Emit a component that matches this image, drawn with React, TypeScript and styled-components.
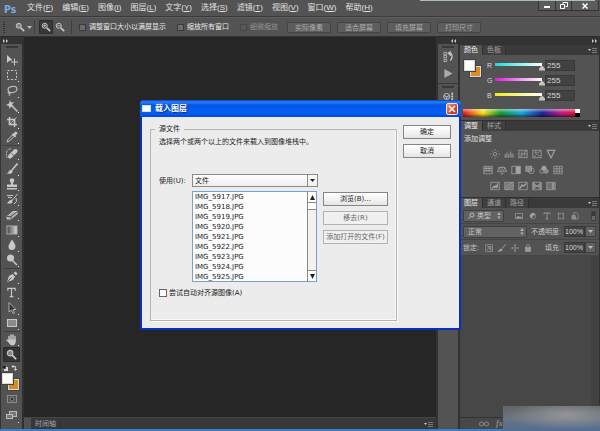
import React from "react";
import styled, { createGlobalStyle, css } from "styled-components";

const sans = `"Liberation Sans", "Noto Sans CJK SC", sans-serif`;
const dialogSans = `"DejaVu Sans", "Noto Sans CJK SC", sans-serif`;

const GlobalStyle = createGlobalStyle`
  * { box-sizing: border-box; }
  body { margin: 0; background: #262626; font-family: ${sans}; font-size: 7px; line-height: 10px; color: #d6d6d6; overflow: hidden; }
  button, input, select { font: inherit; color: inherit; margin: 0; padding: 0; border: 0; background: none; appearance: none; border-radius: 0; outline: 0; }
  svg { display: block; flex: none; }
`;

const Window = styled.div`
  position: relative;
  display: flex;
  flex-direction: column;
  height: 100vh;
  background: #262626;
  border-bottom: 2px solid #3f7cc4;
`;

/* ---------- menu bar ---------- */
const MenuBar = styled.header`
  position: relative;
  display: flex;
  align-items: center;
  height: 17px;
  background: #535353;
  border-bottom: 1px solid #3a3a3a;
`;
const Logo = styled.span`
  width: 27px;
  padding-left: 4px;
  font: bold 11px/15px "Noto Sans", sans-serif;
  color: #79b0e6;
`;
const Menus = styled.nav`
  display: flex;
  flex: 1;
  gap: 9px;
`;
const MenuButton = styled.button`
  font-size: 8px;
  line-height: 14px;
  color: #e2e2e2;
  white-space: nowrap;
`;
const WindowEdge = styled.div`
  position: absolute;
  top: 0;
  left: 70%;
  right: 5px;
  height: 1px;
  background: #a9bcc4;
`;
const WindowButtons = styled.div`
  display: flex;
  align-self: flex-start;
  margin: 1px 1px 0 0;
  border: 1px solid #343434;
  border-top: 0;
`;
const WindowButton = styled.button<{ $wide?: boolean }>`
  display: grid;
  place-items: center;
  width: ${(p) => (p.$wide ? 27 : 16)}px;
  height: 9px;
  background: #5c5c5c;
  & + & { border-left: 1px solid #343434; }
`;

/* ---------- options bar ---------- */
const OptionsBar = styled.div`
  display: flex;
  align-items: center;
  height: 19px;
  padding-left: 3px;
  background: #535353;
  border-top: 1px solid #5e5e5e;
  white-space: nowrap;
`;
const Grip = styled.i`
  width: 2px;
  height: 11px;
  margin-right: 8px;
  border-left: 1px dotted #333;
  border-right: 1px dotted #333;
`;
const Divider = styled.i`
  width: 1px;
  height: 14px;
  margin-left: 2px;
  background: #3f3f3f;
`;
const ToolToggle = styled.button<{ $on?: boolean }>`
  display: grid;
  place-items: center;
  width: 14px;
  height: 14px;
  ${(p) => p.$on && css`background: #383838; border: 1px solid #2c2c2c; border-radius: 1px;`}
`;
const ZoomModes = styled.div`
  display: flex;
  margin: 0 7px 0 4px;
  padding-right: 4px;
  border-right: 1px solid #3f3f3f;
`;
const OptionLabel = styled.label<{ $dim?: boolean }>`
  display: flex;
  align-items: center;
  gap: 3px;
  margin-right: ${(p) => (p.$dim ? 9 : 11)}px;
  color: ${(p) => (p.$dim ? "#929292" : "#e8e8e8")};
  input {
    width: 7px;
    height: 7px;
    background: ${(p) => (p.$dim ? "#575757" : "#6b6b6b")};
    border: 1px solid ${(p) => (p.$dim ? "#474747" : "#3b3b3b")};
  }
`;
const OptionButton = styled.button`
  width: 44px;
  height: 11px;
  margin-right: 6px;
  line-height: 9px;
  color: #ababab;
  background: #5d5d5d;
  border: 1px solid #444;
  border-radius: 1px;
`;

/* ---------- work area ---------- */
const WorkArea = styled.main`
  display: flex;
  flex: 1;
  min-height: 0;
`;
const DockHeader = styled.div<{ $right?: boolean }>`
  display: flex;
  align-items: center;
  justify-content: ${(p) => (p.$right ? "flex-end" : "flex-start")};
  height: 8px;
  padding: 0 2px;
  background: #333;
  border-top: 1px solid #2a2a2a;
`;
const ToolColumn = styled.aside`
  display: flex;
  flex-direction: column;
  width: 24px;
  border-left: 1px solid #333;
  border-right: 2px solid #303030;
  background: #535353;
`;
const PanelGrip = styled.i`
  width: 12px;
  height: 2px;
  margin: 2px auto 0;
  background: #393939;
`;
const ToolStack = styled.div`
  padding-top: 4px;
`;
const ToolGroup = styled.div<{ $height: number }>`
  display: grid;
  grid-auto-rows: 1fr;
  height: ${(p) => p.$height}px;
  margin: 0 2px;
  & + & { border-top: 1px solid #404040; }
`;
const ToolButton = styled.button<{ $on?: boolean }>`
  position: relative;
  display: grid;
  place-items: center;
  ${(p) => p.$on && css`background: #353535; border: 1px solid #292929; border-radius: 1px;`}
`;
const Flyout = styled.i`
  position: absolute;
  right: 1px;
  bottom: 1px;
  width: 1px;
  height: 1px;
  background: #e8e8e8;
`;
const MiniRow = styled.div`
  display: flex;
  justify-content: space-between;
  padding: 3px 4px 2px 1px;
`;
const Swatches = styled.div<{ $size: number }>`
  position: relative;
  width: 17px;
  height: 17px;
  margin-left: 1px;
  i {
    position: absolute;
    width: ${(p) => p.$size}px;
    height: ${(p) => p.$size}px;
    border: 1px solid #d9d9d9;
    outline: 1px solid #444;
  }
  i:first-child { right: 0; bottom: 0; background: #d98c22; }
  i:last-child { left: 0; top: 0; background: #fff; }
`;
const LowerTool = styled.button`
  position: relative;
  display: grid;
  place-items: center;
  height: 17px;
  margin: 0 2px;
`;
const Center = styled.section`
  display: flex;
  flex: 1;
  flex-direction: column;
  min-width: 0;
  border-top: 1px solid #333;
`;
const Canvas = styled.div`
  flex: 1;
  background: #262626;
`;
const Timeline = styled.footer`
  display: flex;
  align-items: center;
  height: 12px;
  padding-right: 3px;
  background: #383838;
  border-top: 1px solid #454545;
`;
const TimelineStub = styled.i`
  width: 7px;
  height: 11px;
  background: #505050;
`;
const TimelineTab = styled.button`
  flex: none;
  margin-right: auto;
  padding: 0 4px;
  border-right: 1px solid #2e2e2e;
  color: #a5a5a5;
`;
const IconStrip = styled.aside`
  display: flex;
  flex-direction: column;
  width: 24px;
  border-left: 2px solid #323232;
  border-right: 2px solid #323232;
  background: #535353;
`;
const StripGroup = styled.div`
  display: flex;
  flex-direction: column;
  align-items: center;
  height: 40px;
  border-bottom: 1px solid #383838;
`;
const StripButton = styled.button`
  display: grid;
  place-items: center;
  height: 17px;
`;

/* ---------- panels ---------- */
const Panels = styled.aside`
  display: flex;
  flex-direction: column;
  width: 140px;
  border-right: 1px solid #303030;
  background: #535353;
`;
const TabBar = styled.div`
  display: flex;
  align-items: center;
  height: 11px;
  padding-right: 2px;
  background: #3a3a3a;
  border-top: 1px solid #303030;
  svg { margin-left: auto; }
`;
const Tab = styled.button<{ $on?: boolean }>`
  height: 10px;
  padding: 0 4px;
  border-right: 1px solid #303030;
  color: ${(p) => (p.$on ? "#ededed" : "#a0a0a0")};
  background: ${(p) => (p.$on ? "#535353" : "#404040")};
`;
const ColorBody = styled.div`
  display: grid;
  grid-template-columns: 17px 1fr;
  column-gap: 7px;
  height: 65px;
  padding: 5px 4px 0 3px;
`;
const ChannelList = styled.div`
  display: flex;
  flex-direction: column;
  gap: 4px;
`;
const Channel = styled.label`
  display: flex;
  align-items: center;
  height: 11px;
  color: #d8d8d8;
  span { width: 8px; }
`;
const Slider = styled.input<{ $color: string }>`
  width: 50px;
  height: 10px;
  &::-webkit-slider-runnable-track {
    height: 10px;
    background: linear-gradient(90deg, ${(p) => p.$color}, #fff) 0 2px / 47px 3px no-repeat;
  }
  &::-webkit-slider-thumb {
    appearance: none;
    width: 6px;
    height: 5px;
    margin-top: 5px;
    background: #c4c4c4;
    clip-path: polygon(50% 0, 100% 60%, 100% 100%, 0 100%, 0 60%);
  }
`;
const NumberBox = styled.input`
  width: 30px;
  height: 11px;
  padding-left: 1px;
  font-size: 8px;
  color: #d5d5d5;
  background: #424242;
  border: 1px solid #383838;
`;
const PercentBox = styled(NumberBox)`
  width: 21px;
  padding: 0;
  font-size: 7px;
`;
const Spectrum = styled.div`
  grid-column: 1 / -1;
  display: flex;
  height: 8px;
  width: 117px;
  margin-top: 4px;
  background:
    linear-gradient(180deg, rgba(255, 255, 255, 0.5), transparent 45%, transparent 55%, rgba(0, 0, 0, 0.55)),
    linear-gradient(90deg, #e8132a, #f7e21c 17%, #189a3a 32%, #1ba5dc 50%, #23239a 68%, #c01c88 84%, #e8132a 98%);
  &::after {
    content: "";
    width: 5px;
    margin-left: auto;
    background: linear-gradient(#fff 50%, #000 50%);
  }
`;
const AdjustBody = styled.div`
  height: 66px;
  padding: 3px 4px;
  color: #e2e2e2;
`;
const AdjustGrid = styled.div`
  display: flex;
  flex-direction: column;
  align-items: center;
  gap: 2px;
  margin: 3px 14px 0 0;
`;
const AdjustRow = styled.div`
  display: flex;
  gap: 2px;
`;
const IconButton = styled.button`
  display: grid;
  place-items: center;
  width: 12px;
  height: 14px;
`;
const LayerRow = styled.div`
  display: flex;
  align-items: center;
  height: 16px;
  padding: 0 3px;
  border-bottom: 1px solid #454545;
  color: #c6c6c6;
  white-space: nowrap;
`;
const SelectFrame = styled.span<{ $width: number }>`
  display: flex;
  align-items: center;
  gap: 2px;
  width: ${(p) => p.$width}px;
  height: 12px;
  padding: 0 2px 0 4px;
  background: #626262;
  border: 1px solid #404040;
  border-radius: 1px;
  select { flex: 1; min-width: 0; height: 10px; }
`;
const LayerIcons = styled.div`
  display: flex;
  flex: 1;
  gap: 2px;
  padding-left: 9px;
`;
const LockIcons = styled(LayerIcons)`
  gap: 1px;
  padding-left: 4px;
`;
const FilterSwitch = styled.button`
  width: 5px;
  height: 10px;
  background: linear-gradient(#383838 45%, #696969 45%);
  border: 1px solid #404040;
`;
const Field = styled.label`
  display: flex;
  align-items: center;
  gap: 3px;
  margin-left: auto;
`;
const DropButton = styled.button`
  display: grid;
  place-items: center;
  width: 11px;
  height: 11px;
  background: #626262;
  border: 1px solid #404040;
`;
const LayerArea = styled.div`
  flex: 1;
  background: #474747;
  border-right: 8px solid #414141;
`;
const LayerFooter = styled.footer`
  display: flex;
  align-items: center;
  gap: 7px;
  height: 12px;
  padding-left: 19px;
  background: #484848;
  border-top: 1px solid #353535;
  color: #8d8d8d;
  em { font: italic bold 8px/10px "Liberation Serif", serif; }
`;
const CornerHaze = styled.div`
  position: absolute;
  right: 0;
  bottom: -2px;
  width: 97px;
  height: 25px;
  background:
    radial-gradient(ellipse at 65% 35%, rgba(165, 165, 165, 0.7), transparent 65%),
    linear-gradient(180deg, #646464, #6b7580 50%, #526d94);
`;

/* ---------- dialog ---------- */
const Dialog = styled.section`
  position: absolute;
  left: 140px;
  top: 100px;
  width: 321px;
  font-family: ${dialogSans};
  color: #222;
  background: #ececec;
  border: 2px solid #0a2fc4;
  border-top: 0;
  border-radius: 4px 4px 0 0;
`;
const TitleBar = styled.header`
  display: flex;
  align-items: center;
  gap: 4px;
  height: 17px;
  margin: 0 -2px;
  padding: 0 3px 0 2px;
  border-radius: 4px 4px 0 0;
  background: linear-gradient(#0841c8, #2a80f8 12%, #0455e6 30%, #0560f5 75%, #0449cf);
  color: #fff;
  h1 { flex: 1; margin: 0; font: bold 8px/14px ${dialogSans}; text-shadow: 1px 1px #0a2a8a; }
`;
const TitleIcon = styled.i`
  width: 9px;
  height: 7px;
  background: #fff;
  border: 1px solid #cfe0ff;
`;
const CloseButton = styled.button`
  display: grid;
  place-items: center;
  width: 12px;
  height: 12px;
  background: linear-gradient(135deg, #f0967a, #d8432a 60%, #b83418);
  border: 1px solid #f5e3de;
  border-radius: 2px;
`;
const DialogBody = styled.div`
  display: flex;
  gap: 6px;
  padding: 7px 8px 7px;
`;
const Source = styled.fieldset`
  flex: 1;
  min-width: 0;
  height: 197px;
  margin: 0;
  padding: 0 8px;
  border: 1px solid #b4b4b4;
  box-shadow: inset -1px -1px #fafafa, 1px 1px #fafafa;
  legend { padding: 0 4px; margin-left: -4px; line-height: 10px; background: #ececec; }
  p { margin: 3px 0 27px; white-space: nowrap; }
`;
const UseRow = styled.div`
  display: grid;
  grid-template-columns: 33px 126px;
  align-items: center;
`;
const UseSelect = styled.span`
  display: flex;
  height: 13px;
  background: linear-gradient(#fff, #eee);
  border: 1px solid #8a8a8a;
  select { flex: 1; padding-left: 2px; height: 11px; }
  svg { box-sizing: content-box; padding: 3px 2px; border-left: 1px solid #8a8a8a; }
`;
const FilesRow = styled.div`
  display: flex;
  gap: 6px;
  margin: 4px 0 0 33px;
`;
const ListFrame = styled.div`
  display: flex;
  width: 126px;
  height: 91px;
  border: 1px solid #6fa3d4;
  background: #fcfcfc;
`;
const FileList = styled.select`
  flex: 1;
  min-width: 0;
  height: 89px;
  padding: 1px 0 0 2px;
  overflow: hidden;
  option { display: block; height: 10px; min-height: 0; padding: 0; line-height: 10px; }
`;
const ScrollBar = styled.div`
  display: flex;
  flex-direction: column;
  width: 9px;
  border-left: 1px solid #888;
`;
const ScrollButton = styled.button`
  display: grid;
  place-items: center;
  height: 10px;
  background: #fff;
`;
const ScrollThumb = styled.i`
  height: 8px;
  border: solid #888;
  border-width: 1px 0;
`;
const ScrollTrack = styled.i`
  flex: 1;
  background: #f2f2f2;
  border-bottom: 1px solid #888;
`;
const Stack = styled.div<{ $width: number }>`
  display: flex;
  flex: none;
  flex-direction: column;
  gap: 5px;
  width: ${(p) => p.$width}px;
  padding-top: 1px;
`;
const DialogButton = styled.button`
  height: 14px;
  line-height: 12px;
  white-space: nowrap;
  color: #222;
  background: linear-gradient(#fff, #f1f1f1 60%, #e4e4e4);
  border: 1px solid #858585;
  &:disabled { color: #666; background: #f0f0f0; border-color: #b2b2b2; }
`;
const AlignLabel = styled.label`
  display: flex;
  align-items: center;
  gap: 2px;
  margin-top: 6px;
  input { width: 8px; height: 8px; background: #fff; border: 1px solid #666; }
`;

/* ---------- icons ---------- */
const Icon = ({ size = 12, children }: { size?: number; children: React.ReactNode }) => (
  <svg width={size} height={size} viewBox="0 0 12 12" fill="none" stroke="#c8c8c8" aria-hidden="true">{children}</svg>
);
const F = "#c8c8c8";
const Chevrons = ({ left }: { left?: boolean }) => (
  <svg width="5" height="4" viewBox="0 0 5 4" fill="#ccc" aria-hidden="true">
    {left ? <path d="M2 0V4L0 2ZM5 0V4L3 2Z" /> : <path d="M0 0V4L2 2ZM3 0V4L5 2Z" />}
  </svg>
);
const PanelMenu = () => (
  <svg width="9" height="6" viewBox="0 0 9 6" aria-hidden="true">
    <path d="M0 2H3L1.5 4Z" fill="#ccc" />
    <path d="M4 1.5H9M4 3.5H9M4 5.5H9" stroke="#777" />
  </svg>
);
const DownArrow = ({ color = "#bbb" }: { color?: string }) => (
  <svg width="5" height="5" viewBox="0 0 5 5" fill={color} aria-hidden="true"><path d="M0 1H5L2.5 4Z" /></svg>
);
const UpDown = () => (
  <svg width="4" height="7" viewBox="0 0 4 7" fill="#aaa" aria-hidden="true"><path d="M0 3L2 0L4 3ZM0 4.500H4L2 7Z" /></svg>
);
const Magnifier = ({ size = 12, sign }: { size?: number; sign?: string }) => (
  <Icon size={size}>
    <circle cx="4.500" cy="4.500" r="3" strokeWidth="1.200" fill={sign ? "none" : "#858585"} />
    {sign && <path d={sign} />}
    <path d="M7 7L11 11" strokeWidth="2" />
  </Icon>
);

const groups: { height: number; tools: [string, React.ReactNode][] }[] = [
  {
    height: 93,
    tools: [
      ["Move", <Icon><path d="M1 1V9L3 7L6.500 6Z" fill={F} stroke="none" /><path d="M8.500 4.500V11.500M5 8H12" /></Icon>],
      ["Marquee", <Icon><rect x="1.500" y="1.500" width="9" height="9" strokeDasharray="2 1.600" /></Icon>],
      ["Lasso", <Icon><ellipse cx="6.500" cy="4.500" rx="4.500" ry="3" transform="rotate(-12 6.500 4.500)" /><path d="M3 7C1 7 2 9 4 8.500C4 9.500 3.500 10 3 11" /></Icon>],
      ["Magic wand", <Icon><path d="M4 0L5 2.500L8 2L6 4.500L8 7L5 6.500L3.500 9L3 6L0 5L3 3.500Z" fill={F} stroke="none" /><path d="M6 6L11.500 11.500" strokeWidth="1.500" /></Icon>],
      ["Crop", <Icon><path d="M3.500 1V8.500H11M1 3.500H8.500V11" strokeWidth="1.600" /><path d="M4 8L10.500 1.500" strokeWidth=".8" /></Icon>],
      ["Eyedropper", <Icon><path d="M1 11L2 8.500L6.500 4L8 5.500L3.500 10Z" /><path d="M5.500 3L9 6.500L10 5.500L9.500 4.500L11.500 2.500Q11 .5 9.500 .5L7.500 2.500Z" fill={F} stroke="none" /></Icon>],
    ],
  },
  {
    height: 123,
    tools: [
      ["Healing brush", <Icon><path d="M4 8.500L9.500 3" strokeWidth="4" strokeLinecap="round" /><path d="M5 1C0 0 0 7 1 10" strokeDasharray="1.500 1" /><path d="M5.500 5.500L8 7.500" stroke="#666" /></Icon>],
      ["Brush", <Icon><path d="M11.500 .5L6 7" strokeWidth="1.600" /><path d="M0 10.500Q2 10.500 3 8Q5 6 6.500 7.500Q7 10 4.500 10.800Z" fill={F} stroke="none" /></Icon>],
      ["Clone stamp", <Icon><circle cx="6" cy="2.500" r="2.300" fill={F} stroke="none" /><path d="M5 4H7V6.500H11V9H1V6.500H5ZM1 10H11V11.500H1Z" fill={F} stroke="none" /></Icon>],
      ["History brush", <Icon><path d="M11.500 1L6 7.500M1 2.500H7M2 4.500H6M10 5Q12 9 8 11" /><path d="M1 10.500Q3 7 5.500 6.500Q7.500 8 5.500 10.500Z" fill={F} stroke="none" /></Icon>],
      ["Eraser", <Icon><path d="M1 7.500L7 2.500H11V5L5 10H1Z" fill="#aaa" /><path d="M1 7.500H5L11 3M5 7.500V10" stroke="#555" /></Icon>],
      ["Gradient", <Icon><defs><linearGradient id="ramp"><stop stopColor="#444" /><stop offset="1" stopColor="#ddd" /></linearGradient></defs><rect x="1" y="2" width="10" height="8" fill="url(#ramp)" stroke="#aaa" /></Icon>],
      ["Blur", <Icon><path d="M6 .5Q9.500 5.500 9.500 7.500Q9 11 6 11Q2.500 11 2.500 7.500Q2.500 5.500 6 .5Z" fill={F} stroke="none" /></Icon>],
      ["Dodge", <Icon><circle cx="4.500" cy="4" r="3.500" fill={F} stroke="none" /><path d="M6.500 6.500L11 11" strokeWidth="1.500" /></Icon>],
    ],
  },
  {
    height: 63,
    tools: [
      ["Pen", <Icon><path d="M1 11L3 5L6.500 3L9 5.500L7 9Z" fill={F} stroke="none" /><path d="M7.500 2L10 4.500L11.500 2.500L9.500 .5Z" fill={F} stroke="none" /><path d="M1.500 10.500L5.500 6.500" stroke="#555" /></Icon>],
      ["Type", <Icon size={11}><path d="M2 4V1.500H10V4M6 1.500V10.500M4 10.500H8" strokeWidth="1.300" /></Icon>],
      ["Path selection", <Icon><path d="M3 .5V10L5.500 8L7 11.500L8.500 11L7 7.500H10Z" fill="#333" strokeWidth=".8" /></Icon>],
      ["Rectangle", <Icon><rect x="1.500" y="2.500" width="9" height="7" fill="#8b8b8b" /></Icon>],
    ],
  },
  {
    height: 31,
    tools: [
      ["Hand", <Icon><path d="M3 2.500V7M5 1V6M7 1V6M9 2.500V7M1 6L3.500 8.500" strokeWidth="1.400" strokeLinecap="round" /><path d="M2.500 5.500H9.700V8Q9 11.500 6.500 11.500Q4 11.500 2.500 8Z" fill={F} stroke="none" /></Icon>],
      ["Zoom", <Magnifier size={11} />],
    ],
  },
];

const menus = [["文件", "F"], ["编辑", "E"], ["图像", "I"], ["图层", "L"], ["文字", "Y"], ["选择", "S"], ["滤镜", "T"], ["视图", "V"], ["窗口", "W"], ["帮助", "H"]];

const adjustments: [string, React.ReactNode][][] = [
  [
    ["Brightness", <><circle cx="6" cy="6" r="2" /><path d="M6 0V2M6 10V12M0 6H2M10 6H12M2 2L3.200 3.200M8.800 8.800L10 10M10 2L8.800 3.200M2 10L3.200 8.800" /></>],
    ["Levels", <path d="M0 9.500H12M1.500 9V6M3.500 9V4M5.500 9V6M7.500 9V3M9.500 9V5M11 9V6" />],
    ["Curves", <><rect x="1" y="1.500" width="10" height="9" /><path d="M1 10C6 9 6 3 11 2M4.500 2V10M8 2V10M1 6H11" strokeWidth=".8" /></>],
    ["Exposure", <><rect x="1" y="1.500" width="10" height="9" /><path d="M2 10L10 2M3 4H6M4.500 2.500V5.500M7 8H10" /></>],
    ["Vibrance", <path d="M1.500 1.500H10.500L6 10.500Z" strokeWidth="1.500" />],
  ],
  [
    ["Hue", <><rect x="1" y="1.500" width="10" height="9" /><path d="M1 4H11M1 7H11M4 2V7M7.500 2V7" strokeWidth="1.400" /></>],
    ["Color balance", <><path d="M6 1V10M2 3H10M4 10.500H8M2.500 3L.5 8H4.500ZM9.500 3L7.500 8H11.500Z" /></>],
    ["Black and white", <><rect x="1" y="1.500" width="10" height="9" /><path d="M6 2H11V10H6Z" fill="#a5a5a5" /></>],
    ["Photo filter", <><rect x="1" y="1.500" width="7" height="6" fill="#888" /><circle cx="7.500" cy="7" r="3.500" /></>],
    ["Channel mixer", <><circle cx="6" cy="4" r="2.700" fill="#a5a5a5" /><circle cx="3.500" cy="7.500" r="2.500" /><circle cx="8.500" cy="7.500" r="2.500" fill="#888" /></>],
    ["Color lookup", <><rect x="1" y="1.500" width="10" height="9" /><path d="M1 4.500H11M1 7.500H11M4.500 2V10M7.500 2V10" /></>],
  ],
  [
    ["Invert", <><rect x="1" y="1.500" width="10" height="9" /><path d="M3 9C3 4 8 8 9 3V8H4Z" fill="#a5a5a5" /></>],
    ["Posterize", <><rect x="1" y="1.500" width="10" height="9" fill="#777" /><path d="M1 8L10 2M3 10L11 5" /></>],
    ["Threshold", <><rect x="1" y="1.500" width="10" height="9" /><path d="M2 9L5 5L7 6L10 3" strokeWidth="2" /></>],
    ["Selective color", <><rect x="1" y="1.500" width="10" height="9" /><path d="M1.500 2L10.500 10V2L1.500 10Z" fill="#888" /></>],
    ["Gradient map", <><rect x="1" y="1.500" width="10" height="9" fill="#707070" /><path d="M8.500 2V10" strokeWidth="2" /></>],
  ],
];
const filterIcons: [string, React.ReactNode][] = [
  ["Pixel layers", <><rect x="1" y="2" width="10" height="8" /><path d="M2 9L5 6L7 8L8 7L10 9Z" fill="#a0a0a0" /></>],
  ["Adjustment layers", <><circle cx="6" cy="6" r="4" /><path d="M3 9A4 4 0 0 1 9 3Z" fill="#a0a0a0" /></>],
  ["Type layers", <path d="M1.500 3.500V1.500H10.500V3.500M6 1.500V10.500M4 10.500H8" strokeWidth="1.300" />],
  ["Shape layers", <path d="M2.500 1V11M9.500 1V11M1 2.500H11M1 9.500H11" />],
  ["Smart objects", <><path d="M4 1H8L10.500 3.500V10.500H4Z" /><rect x="1.500" y="5.500" width="5" height="5" fill="#888" /></>],
];
const lockIcons: [string, React.ReactNode][] = [
  ["Lock pixels", <><rect x="1" y="1" width="10" height="10" /><path d="M3 4H6V7H9V10M6 4H9V6M3 8H5" strokeWidth="1.400" /></>],
  ["Lock painting", <><path d="M11.500 .5L6 7" strokeWidth="1.500" /><path d="M0 11L3 8L6 7.500L5.500 10.500Z" fill="#aaa" /></>],
  ["Lock position", <path d="M6 0V12M0 6H12M4.500 2H7.500M4.500 10H7.500M2 4.500V7.500M10 4.500V7.500" />],
  ["Lock all", <><rect x="2" y="5" width="8" height="6" fill="#999" /><path d="M3.500 5V2.500Q6 0 8.500 2.500V5" strokeWidth="1.300" /></>],
];
const Glyph = ({ size = 10, children }: { size?: number; children: React.ReactNode }) => (
  <svg width={size} height={size} viewBox="0 0 12 12" fill="none" stroke="#9c9c9c" aria-hidden="true">{children}</svg>
);

const files = Array.from({ length: 9 }, (_, i) => `IMG_${5917 + i}.JPG`);

function LoadLayersDialog() {
  return (
    <Dialog role="dialog" aria-labelledby="dialog-title">
      <TitleBar>
        <TitleIcon />
        <h1 id="dialog-title">载入图层</h1>
        <CloseButton aria-label="关闭">
          <svg width="8" height="8" viewBox="0 0 8 8" stroke="#fff" strokeWidth="1.500"><path d="M1 1L7 7M7 1L1 7" /></svg>
        </CloseButton>
      </TitleBar>
      <DialogBody>
        <Source>
          <legend>源文件</legend>
          <p>选择两个或两个以上的文件来载入到图像堆栈中。</p>
          <UseRow>
            <label htmlFor="use">使用(U):</label>
            <UseSelect>
              <select id="use"><option>文件</option></select>
              <DownArrow color="#222" />
            </UseSelect>
          </UseRow>
          <FilesRow>
            <ListFrame>
              <FileList multiple size={9} aria-label="源文件">
                {files.map((name) => <option key={name}>{name}</option>)}
              </FileList>
              <ScrollBar>
                <ScrollButton aria-label="向上"><svg width="5" height="5" viewBox="0 0 5 5"><path d="M0 5H5L2.500 0Z" fill="#222" /></svg></ScrollButton>
                <ScrollThumb />
                <ScrollTrack />
                <ScrollButton aria-label="向下"><svg width="5" height="5" viewBox="0 0 5 5"><path d="M0 0H5L2.500 5Z" fill="#222" /></svg></ScrollButton>
              </ScrollBar>
            </ListFrame>
            <Stack $width={65}>
              <DialogButton>浏览(B)...</DialogButton>
              <DialogButton disabled>移去(R)</DialogButton>
              <DialogButton disabled>添加打开的文件(F)</DialogButton>
            </Stack>
          </FilesRow>
          <AlignLabel><input type="checkbox" />尝试自动对齐源图像(A)</AlignLabel>
        </Source>
        <Stack $width={48}>
          <DialogButton>确定</DialogButton>
          <DialogButton>取消</DialogButton>
        </Stack>
      </DialogBody>
    </Dialog>
  );
}

export default function App() {
  return (
    <Window>
      <GlobalStyle />
      <MenuBar>
        <Logo>Ps</Logo>
        <Menus>
          {menus.map(([name, key]) => <MenuButton key={key}>{name}(<u>{key}</u>)</MenuButton>)}
        </Menus>
        <WindowEdge />
        <WindowButtons>
          <WindowButton aria-label="最小化"><svg width="6" height="6" viewBox="0 0 6 6"><path d="M0 4H6" stroke="#fff" strokeWidth="2" /></svg></WindowButton>
          <WindowButton aria-label="还原"><svg width="8" height="7" viewBox="0 0 8 7" fill="none" stroke="#fff"><path d="M3 2.500V.500H7.500V4.500H5.500M.500 2.500H4.500V6.500H.500Z" /></svg></WindowButton>
          <WindowButton $wide aria-label="关闭"><svg width="6" height="6" viewBox="0 0 6 6" stroke="#fff" strokeWidth="1.500"><path d="M.500 .500L5.500 5.500M5.500 .500L.500 5.500" /></svg></WindowButton>
        </WindowButtons>
      </MenuBar>
      <OptionsBar>
        <Grip />
        <ToolToggle aria-label="缩放工具"><Magnifier size={10} /></ToolToggle>
        <DownArrow />
        <Divider />
        <ZoomModes>
          <ToolToggle $on aria-label="放大"><Magnifier size={10} sign="M2.500 4.500H6.500M4.500 2.500V6.500" /></ToolToggle>
          <ToolToggle aria-label="缩小"><Magnifier size={10} sign="M2.500 4.500H6.500" /></ToolToggle>
        </ZoomModes>
        <OptionLabel><input type="checkbox" />调整窗口大小以满屏显示</OptionLabel>
        <OptionLabel><input type="checkbox" />缩放所有窗口</OptionLabel>
        <OptionLabel $dim><input type="checkbox" disabled />细微缩放</OptionLabel>
        {["实际像素", "适合屏幕", "填充屏幕", "打印尺寸"].map((t) => <OptionButton key={t}>{t}</OptionButton>)}
      </OptionsBar>
      <WorkArea>
        <ToolColumn>
          <DockHeader><Chevrons /></DockHeader>
          <PanelGrip />
          <ToolStack>
            {groups.map((g, i) => (
              <ToolGroup key={i} $height={g.height}>
                {g.tools.map(([name, icon]) => (
                  <ToolButton key={name} aria-label={name} $on={name === "Zoom"}>
                    {icon}
                    {name !== "Zoom" && name !== "Move" && <Flyout />}
                  </ToolButton>
                ))}
              </ToolGroup>
            ))}
          </ToolStack>
          <MiniRow>
            <svg width="6" height="6" viewBox="0 0 6 6"><path d="M2 2H6V6H2Z" fill="#ddd" /><path d="M0 0H4V4H0Z" fill="#222" stroke="#aaa" strokeWidth=".5" /></svg>
            <svg width="7" height="6" viewBox="0 0 7 6" fill="none" stroke="#ccc"><path d="M1 1.500H4.500V5M2.500 0L1 1.500L2.500 3M3 4L4.500 5.500L6 4" /></svg>
          </MiniRow>
          <Swatches $size={11}><i /><i /></Swatches>
          <LowerTool aria-label="快速蒙版"><svg width="10" height="8" viewBox="0 0 10 8" fill="none" stroke="#8d8d8d"><rect x=".5" y=".5" width="9" height="7" /><circle cx="5" cy="4" r="2" fill="#333" /></svg></LowerTool>
          <LowerTool aria-label="屏幕模式"><svg width="11" height="9" viewBox="0 0 11 9" fill="#777" stroke="#bbb"><rect x="3.500" y=".5" width="7" height="5" /><rect x=".5" y="3.500" width="6" height="4" /></svg><Flyout /></LowerTool>
        </ToolColumn>
        <Center>
          <Canvas />
          <Timeline><TimelineStub /><TimelineTab>时间轴</TimelineTab><PanelMenu /></Timeline>
        </Center>
        <IconStrip>
          <DockHeader $right><Chevrons left /></DockHeader>
          <StripGroup>
            <PanelGrip />
            <StripButton aria-label="历史记录"><Icon size={11}><path d="M1 1.500H4V4H1ZM1 5H4V7.500H1ZM1 9H4V11.500H1Z" strokeWidth=".8" /><path d="M6 2.500H8.500Q11.500 6 8 10.500M8.500 .5L6 2.500L8.500 5" strokeWidth="1.400" /></Icon></StripButton>
            <StripButton aria-label="动作"><Icon size={11}><path d="M1.500 1L10.500 6L1.500 11Z" fill="#aaa" stroke="none" /></Icon></StripButton>
          </StripGroup>
          <PanelGrip />
          <StripButton aria-label="属性"><Icon size={11}><circle cx="4" cy="6" r="3.300" /><path d="M1 5L4 6.500L7 5M4 6.500V9" /><path d="M9 2H11V4H9ZM9 5H11V7H9ZM9 8H11V10H9Z" fill={F} stroke="none" /></Icon></StripButton>
        </IconStrip>
        <Panels>
          <DockHeader $right><Chevrons /></DockHeader>
          <TabBar><Tab $on>颜色</Tab><Tab>色板</Tab><PanelMenu /></TabBar>
          <ColorBody>
            <Swatches $size={11}><i /><i /></Swatches>
            <ChannelList>
              {[["R", "#1bdcdc"], ["G", "#dc1bdc"], ["B", "#ecec1b"]].map(([name, color]) => (
                <Channel key={name}>
                  <span>{name}</span>
                  <Slider type="range" min={0} max={255} defaultValue={255} $color={color} />
                  <NumberBox defaultValue="255" aria-label={name} />
                </Channel>
              ))}
            </ChannelList>
            <Spectrum />
          </ColorBody>
          <TabBar><Tab $on>调整</Tab><Tab>样式</Tab><PanelMenu /></TabBar>
          <AdjustBody>
            添加调整
            <AdjustGrid>
              {adjustments.map((row, i) => (
                <AdjustRow key={i}>
                  {row.map(([name, icon]) => <IconButton key={name} aria-label={name}><Glyph>{icon}</Glyph></IconButton>)}
                </AdjustRow>
              ))}
            </AdjustGrid>
          </AdjustBody>
          <TabBar><Tab $on>图层</Tab><Tab>通道</Tab><Tab>路径</Tab><PanelMenu /></TabBar>
          <LayerRow>
            <SelectFrame $width={41}>
              <svg width="7" height="7" viewBox="0 0 7 7" fill="none" stroke="#bbb"><circle cx="4" cy="3" r="2" /><path d="M2.500 4.500L.5 6.500" /></svg>
              <select aria-label="过滤"><option>类型</option></select>
              <UpDown />
            </SelectFrame>
            <LayerIcons>
              {filterIcons.map(([name, icon]) => <IconButton key={name} aria-label={name}><Glyph size={8}>{icon}</Glyph></IconButton>)}
            </LayerIcons>
            <FilterSwitch aria-label="打开过滤" />
          </LayerRow>
          <LayerRow>
            <SelectFrame $width={64}><select aria-label="混合模式"><option>正常</option></select><UpDown /></SelectFrame>
            <Field>不透明度:<PercentBox defaultValue="100%" /></Field>
            <DropButton aria-label="不透明度选项"><DownArrow /></DropButton>
          </LayerRow>
          <LayerRow>
            锁定:
            <LockIcons>
              {lockIcons.map(([name, icon]) => <IconButton key={name} aria-label={name}><Glyph size={8}>{icon}</Glyph></IconButton>)}
            </LockIcons>
            <Field>填充:<PercentBox defaultValue="100%" /></Field>
            <DropButton aria-label="填充选项"><DownArrow /></DropButton>
          </LayerRow>
          <LayerArea />
          <LayerFooter>
            <svg width="10" height="6" viewBox="0 0 10 6" fill="none" stroke="#8d8d8d"><circle cx="2.500" cy="3" r="2" /><circle cx="7.500" cy="3" r="2" /></svg>
            <em>fx</em>
          </LayerFooter>
        </Panels>
      </WorkArea>
      <CornerHaze />
      <LoadLayersDialog />
    </Window>
  );
}
